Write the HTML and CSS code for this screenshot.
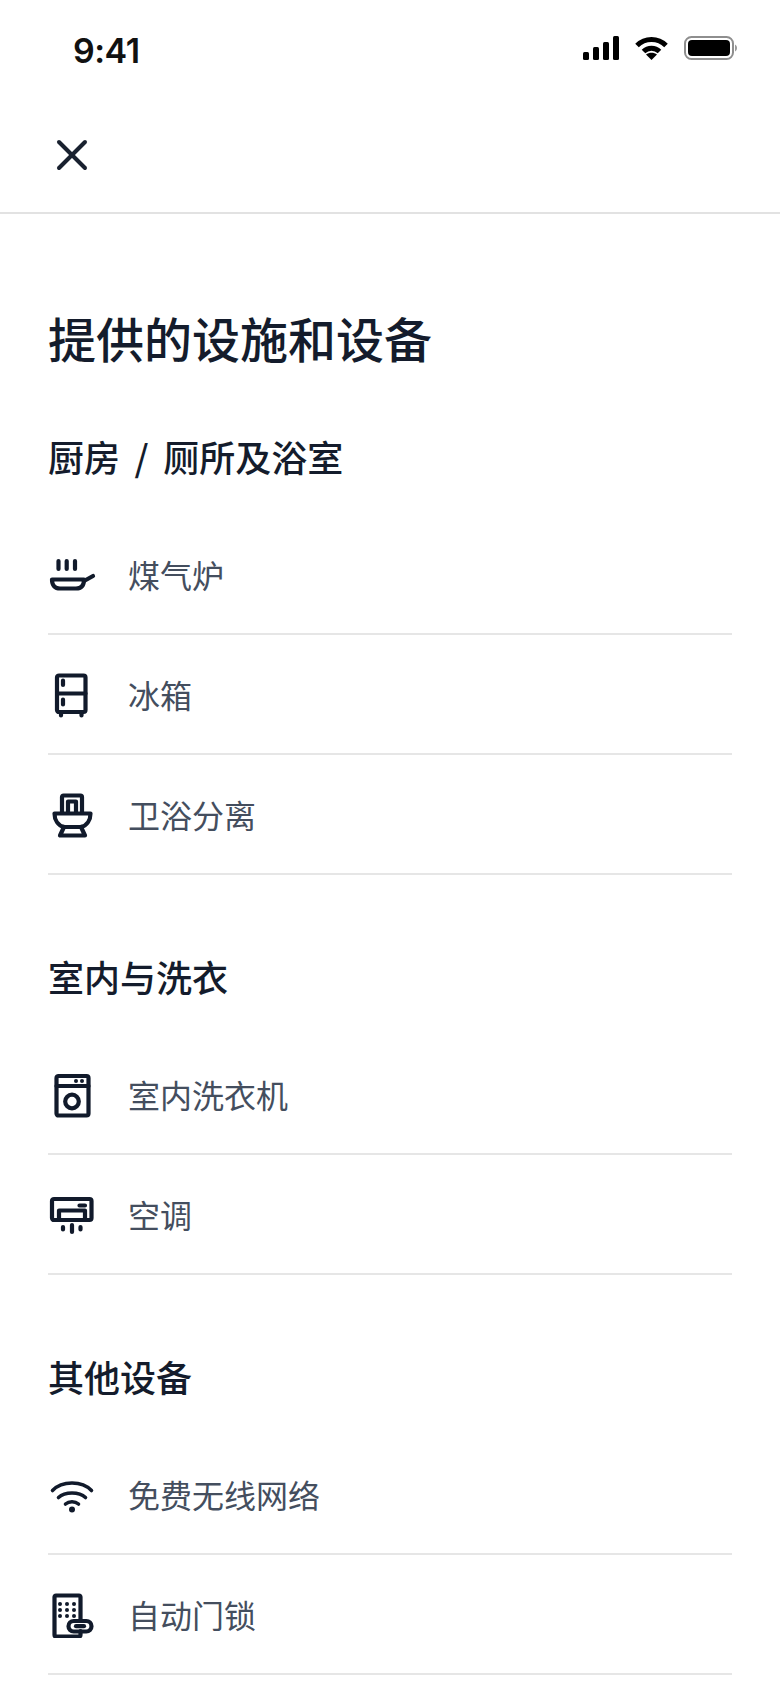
FILE: index.html
```html
<!DOCTYPE html>
<html lang="zh-CN">
<head>
  <meta charset="UTF-8">
  <title>提供的设施和设备</title>
  <link rel="stylesheet" href="styles.css">
</head>
<body>

  <div class="status-bar">
    <span class="time">9:41</span>
    <div class="status-icons">
      <svg class="signal" width="36" height="24" viewBox="0 0 36 24" fill="#000">
        <rect x="0" y="16" width="6" height="8" rx="1.5"/>
        <rect x="10" y="11" width="6" height="13" rx="1.5"/>
        <rect x="20" y="6" width="6" height="18" rx="1.5"/>
        <rect x="30" y="0" width="6" height="24" rx="1.5"/>
      </svg>
      <svg class="wifi" width="33" height="24" viewBox="0 0 33 24" fill="none" stroke="#000" stroke-width="5">
        <path d="M2 9.500C10 1.500 23 1.500 31 9.500"/>
        <path d="M8.500 15.500C13 11 20 11 24.500 15.500"/>
        <path d="M16.500 24L11 18.500C14 16 19 16 22 18.500Z" fill="#000" stroke="none"/>
      </svg>
      <svg class="battery" width="53" height="24" viewBox="0 0 53 24">
        <rect x="1" y="1" width="48" height="22" rx="6.500" fill="none" stroke="#8e8e8e" stroke-width="2"/>
        <rect x="4" y="4" width="42" height="16" rx="4" fill="#000"/>
        <path d="M51 8.500C52.500 9.500 53 10.500 53 12C53 13.500 52.500 14.500 51 15.500Z" fill="#9a9a9a"/>
      </svg>
    </div>
  </div>

  <div class="nav-bar">
    <svg width="32" height="32" viewBox="0 0 32 32" fill="none" stroke="#19212f" stroke-width="4" stroke-linecap="round">
      <path d="M3 3L29 29"/>
      <path d="M29 3L3 29"/>
    </svg>
  </div>

  <div class="content">
    <h1>提供的设施和设备</h1>

    <section class="group">
      <h2>厨房 / 厕所及浴室</h2>
      <div class="row">
        <svg class="icon" viewBox="0 0 48 48">
          <path d="M10.500 11V19M18.700 11V19M27 11V19"/>
          <path d="M4 29.500H36C36 35.500 33 38.500 28 38.500H12C7 38.500 4 35.500 4 29.500Z"/>
          <path d="M36 31L45 26"/>
        </svg>
        <span>煤气炉</span>
      </div>
      <div class="row">
        <svg class="icon" viewBox="0 0 48 48">
          <rect x="9" y="5.500" width="28.500" height="36.500" rx="2"/>
          <path d="M9 23.500H37.500M15 10.500V15M15 29.500V34.500M13 42V45.500M33.500 42V45.500"/>
        </svg>
        <span>冰箱</span>
      </div>
      <div class="row">
        <svg class="icon" viewBox="0 0 48 48">
          <path d="M14 22V7C14 6 14.500 5.500 15.500 5.500H32.500C33.500 5.500 34 6 34 7V22"/>
          <path d="M20 22V11.500H28V22"/>
          <path d="M6.500 23.500H42.500C42.500 30 39 35.500 33 37H16C10 35.500 6.500 30 6.500 23.500Z"/>
          <path d="M16 37L12 45.500H37L33 37"/>
        </svg>
        <span>卫浴分离</span>
      </div>
    </section>

    <section class="group">
      <h2>室内与洗衣</h2>
      <div class="row">
        <svg class="icon" viewBox="0 0 48 48">
          <rect x="8.500" y="6" width="32" height="39.500" rx="2"/>
          <path d="M8.500 16H40.500"/>
          <circle cx="24" cy="31.500" r="6.800"/>
          <circle class="dot" cx="28" cy="11" r="2"/>
          <circle class="dot" cx="34" cy="11" r="2"/>
        </svg>
        <span>室内洗衣机</span>
      </div>
      <div class="row">
        <svg class="icon" viewBox="0 0 48 48">
          <rect x="4" y="9" width="39.500" height="21" rx="2"/>
          <path d="M11 29V20.500H37V29M31.500 15.500H37M15 37V39.500M24 35V42M32.500 37V39.500"/>
        </svg>
        <span>空调</span>
      </div>
    </section>

    <section class="group">
      <h2>其他设备</h2>
      <div class="row">
        <svg class="icon icon-thin" viewBox="0 0 48 48">
          <path d="M4.500 20.500C14 10.500 34 10.500 43.500 20.500"/>
          <path d="M10.500 27.500C17 21.500 31 21.500 37.500 27.500"/>
          <path d="M17.500 34C21 31 27 31 30.500 34"/>
          <circle class="dot" cx="24" cy="39.500" r="3"/>
        </svg>
        <span>免费无线网络</span>
      </div>
      <div class="row">
        <svg class="icon" viewBox="0 0 48 48">
          <path d="M32.500 29V7C32.500 6 32 5.500 31 5.500H8C7 5.500 6.500 6 6.500 7V45C6.500 46 7 46.500 8 46.500H31C32 46.500 32.500 46 32.500 45V41"/>
          <g class="dots">
            <circle cx="12" cy="14" r="2"/><circle cx="19" cy="14" r="2"/><circle cx="26" cy="14" r="2"/>
            <circle cx="12" cy="20" r="2"/><circle cx="19" cy="20" r="2"/><circle cx="26" cy="20" r="2"/>
            <circle cx="12" cy="26" r="2"/><circle cx="19" cy="26" r="2"/><circle cx="26" cy="26" r="2"/>
          </g>
          <rect x="20.500" y="31" width="23" height="10.500" rx="5.200"/>
          <path d="M28 36.200H36"/>
        </svg>
        <span>自动门锁</span>
      </div>
    </section>
  </div>

</body>
</html>
```

FILE: styles.css
```css
body {
  margin: 0;
  background: #fff;
  font-family: "Noto Sans CJK SC", "Noto Sans", sans-serif;
  color: #141c2c;
}

.status-bar {
  height: 100px;
  padding: 0 43px 0 73px;
  display: flex;
  justify-content: space-between;
  align-items: center;
  box-sizing: border-box;
}

.time {
  font-family: Inter, "Liberation Sans", sans-serif;
  font-size: 34px;
  font-weight: 600;
  letter-spacing: -0.5px;
  color: #111;
}

.status-icons {
  display: flex;
  align-items: center;
  gap: 16px;
  padding-bottom: 4px;
}

.status-icons svg {
  display: block;
}

.nav-bar {
  height: 114px;
  padding-left: 56px;
  display: flex;
  align-items: center;
  border-bottom: 2px solid #e2e2e2;
  box-sizing: border-box;
  padding-bottom: 2px;
}

.content {
  padding: 91px 48px 0;
}

h1 {
  margin: 0 0 64px;
  font-size: 48px;
  line-height: 64px;
  font-weight: 500;
}

h2 {
  margin: 0 0 36px;
  font-size: 36px;
  line-height: 46px;
  font-weight: 500;
  word-spacing: 6.500px;
}

.group + .group {
  margin-top: 78px;
}

.row {
  height: 120px;
  display: flex;
  align-items: center;
  gap: 32px;
  border-bottom: 2px solid #e6e6e6;
  box-sizing: border-box;
  font-size: 32px;
  color: #444e5e;
}

.icon {
  width: 48px;
  height: 48px;
  flex: none;
  fill: none;
  stroke: #111a2b;
  stroke-width: 4.200;
  stroke-linecap: round;
  stroke-linejoin: round;
}

.icon-thin {
  stroke-width: 3.600;
}

.icon .dot, .icon .dots {
  fill: #111a2b;
  stroke: none;
}
```
